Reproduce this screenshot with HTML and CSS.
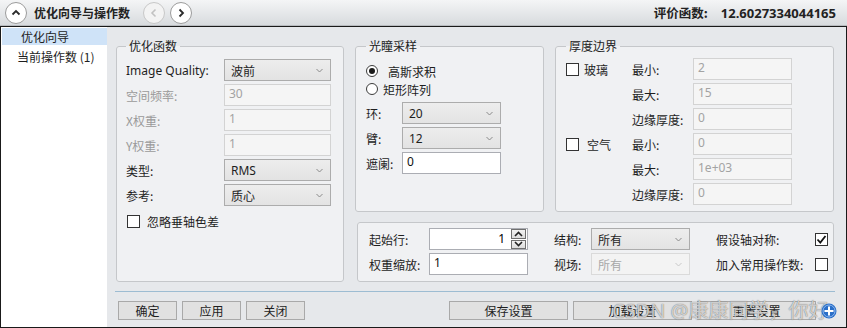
FILE: index.html
```html
<!DOCTYPE html>
<html lang="zh-CN">
<head>
    <meta charset="UTF-8">
    <title>优化向导与操作数</title>
    <link rel="stylesheet" href="styles.css">
</head>
<body>
<div class="window">
    <div class="topbar">
        <button class="round-btn">
            <svg width="10" height="10" viewBox="0 0 10 10"><polyline points="1.5,6.5 5,3 8.5,6.5" fill="none" stroke="#2b2b2b" stroke-width="1.8"/></svg>
        </button>
        <span class="title">优化向导与操作数</span>
        <button class="round-btn nav disabled">
            <svg width="10" height="10" viewBox="0 0 10 10"><polyline points="6.5,1.5 3,5 6.5,8.5" fill="none" stroke="#c2c2c2" stroke-width="1.6"/></svg>
        </button>
        <button class="round-btn">
            <svg width="10" height="10" viewBox="0 0 10 10"><polyline points="3.5,1.5 7,5 3.5,8.5" fill="none" stroke="#2b2b2b" stroke-width="1.8"/></svg>
        </button>
        <span class="spacer"></span>
        <span class="merit-label">评价函数:</span>
        <span class="merit-value">12.6027334044165</span>
    </div>

    <div class="frame">
        <ul class="side">
            <li class="active">优化向导</li>
            <li>当前操作数 (1)</li>
        </ul>

        <div class="content">
            <div class="groups">
                <!-- 优化函数 -->
                <fieldset class="group g-func">
                    <legend>优化函数</legend>
                    <div class="form func-form">
                        <label class="latin">Image Quality:</label>
                        <div class="select"><span>波前</span><svg class="chev" width="7" height="5" viewBox="0 0 7 5"><polyline points="0.5,1 3.5,4 6.5,1" fill="none" stroke="#8a8a8a" stroke-width="1"/></svg></div>

                        <label class="off">空间频率:</label>
                        <input class="field" type="text" value="30" disabled>

                        <label class="off">X权重:</label>
                        <input class="field" type="text" value="1" disabled>

                        <label class="off">Y权重:</label>
                        <input class="field" type="text" value="1" disabled>

                        <label>类型:</label>
                        <div class="select"><span class="latin">RMS</span><svg class="chev" width="7" height="5" viewBox="0 0 7 5"><polyline points="0.5,1 3.5,4 6.5,1" fill="none" stroke="#8a8a8a" stroke-width="1"/></svg></div>

                        <label>参考:</label>
                        <div class="select"><span>质心</span><svg class="chev" width="7" height="5" viewBox="0 0 7 5"><polyline points="0.5,1 3.5,4 6.5,1" fill="none" stroke="#8a8a8a" stroke-width="1"/></svg></div>
                    </div>
                    <div class="check-row">
                        <span class="check"></span>
                        <span>忽略垂轴色差</span>
                    </div>
                </fieldset>

                <!-- 光瞳采样 -->
                <fieldset class="group g-pupil">
                    <legend>光瞳采样</legend>
                    <div class="radios">
                        <div class="radio-row"><span class="radio on"></span><span class="r1">高斯求积</span></div>
                        <div class="radio-row"><span class="radio"></span><span class="r2">矩形阵列</span></div>
                    </div>
                    <div class="form pupil-form">
                        <label>环:</label>
                        <div class="select"><span class="latin">20</span><svg class="chev" width="7" height="5" viewBox="0 0 7 5"><polyline points="0.5,1 3.5,4 6.5,1" fill="none" stroke="#8a8a8a" stroke-width="1"/></svg></div>

                        <label>臂:</label>
                        <div class="select"><span class="latin">12</span><svg class="chev" width="7" height="5" viewBox="0 0 7 5"><polyline points="0.5,1 3.5,4 6.5,1" fill="none" stroke="#8a8a8a" stroke-width="1"/></svg></div>

                        <label>遮阑:</label>
                        <input class="field" type="text" value="0">
                    </div>
                </fieldset>

                <!-- 厚度边界 -->
                <fieldset class="group g-thick">
                    <legend>厚度边界</legend>
                    <div class="form thick-form">
                        <div class="check-cell"><span class="check"></span><span class="cl1">玻璃</span></div>
                        <label>最小:</label>
                        <input class="field" type="text" value="2" disabled>

                        <div></div>
                        <label>最大:</label>
                        <input class="field" type="text" value="15" disabled>

                        <div></div>
                        <label>边缘厚度:</label>
                        <input class="field" type="text" value="0" disabled>

                        <div class="check-cell"><span class="check"></span><span class="cl2">空气</span></div>
                        <label>最小:</label>
                        <input class="field" type="text" value="0" disabled>

                        <div></div>
                        <label>最大:</label>
                        <input class="field" type="text" value="1e+03" disabled>

                        <div></div>
                        <label>边缘厚度:</label>
                        <input class="field" type="text" value="0" disabled>
                    </div>
                </fieldset>

                <!-- 操作数设置 -->
                <fieldset class="group g-ops">
                    <div class="form ops-form">
                        <label>起始行:</label>
                        <div class="spin">
                            <input type="text" value="1">
                            <div class="spin-btns">
                                <span><svg width="9" height="6" viewBox="0 0 9 6"><polyline points="1,5 4.5,1.5 8,5" fill="none" stroke="#222" stroke-width="1.6"/></svg></span>
                                <span><svg width="9" height="6" viewBox="0 0 9 6"><polyline points="1,1 4.5,4.5 8,1" fill="none" stroke="#222" stroke-width="1.6"/></svg></span>
                            </div>
                        </div>
                        <label>结构:</label>
                        <div class="select"><span>所有</span><svg class="chev" width="7" height="5" viewBox="0 0 7 5"><polyline points="0.5,1 3.5,4 6.5,1" fill="none" stroke="#8a8a8a" stroke-width="1"/></svg></div>
                        <label>假设轴对称:</label>
                        <span class="check checked"><svg width="11" height="11" viewBox="0 0 11 11"><polyline points="1.5,5.5 4.3,8.5 9.5,2" fill="none" stroke="#111" stroke-width="1.8"/></svg></span>

                        <label>权重缩放:</label>
                        <input class="field" type="text" value="1">
                        <label>视场:</label>
                        <div class="select disabled"><span>所有</span><svg class="chev" width="7" height="5" viewBox="0 0 7 5"><polyline points="0.5,1 3.5,4 6.5,1" fill="none" stroke="#c8c8c8" stroke-width="1"/></svg></div>
                        <label>加入常用操作数:</label>
                        <span class="check"></span>
                    </div>
                </fieldset>
            </div>

            <div class="sep"></div>

            <div class="actions">
                <button class="btn small">确定</button>
                <button class="btn small">应用</button>
                <button class="btn small">关闭</button>
                <span class="spacer"></span>
                <button class="btn wide">保存设置</button>
                <button class="btn wide">加载设置</button>
                <button class="btn wide">重置设置</button>
            </div>
        </div>
    </div>

    <div class="watermark">CSDN @康康同学，你好</div>
    <svg class="help" width="16" height="16" viewBox="0 0 16 16">
        <circle cx="8" cy="8" r="7.5" fill="#2a6fc9"/>
        <circle cx="8" cy="8" r="6" fill="none" stroke="#8fb8ee" stroke-width="1"/>
        <path d="M8 3.5v9M3.5 8h9" stroke="#fff" stroke-width="2"/>
    </svg>
</div>
</body>
</html>
```

FILE: styles.css
```css
* {
    box-sizing: border-box;
}
body {
    margin: 0;
    font-family: "Noto Sans CJK SC", sans-serif;
    font-size: 12px;
    color: #1e1e1e;
    background: #fff;
}
.latin {
    font-family: "Noto Sans", "Noto Sans CJK SC", sans-serif;
}
.window {
    position: relative;
    width: 847px;
    height: 328px;
    display: flex;
    flex-direction: column;
    overflow: hidden;
}

/* top bar */
.topbar {
    height: 26px;
    display: flex;
    align-items: center;
    padding: 0 11px 0 5px;
    background: linear-gradient(#f4f5f6, #d8dbde);
    border-bottom: 1px solid #b8bbbf;
}
.round-btn {
    width: 22px;
    height: 22px;
    padding: 0;
    border-radius: 50%;
    border: 1px solid #9c9c9c;
    background: #fff;
    display: flex;
    align-items: center;
    justify-content: center;
}
.round-btn.nav {
    margin-left: 13px;
    margin-right: 5px;
}
.round-btn.disabled {
    border-color: #c8c8c8;
    background: #f3f3f3;
}
.title {
    margin-left: 7px;
    font-weight: bold;
    font-size: 12px;
    color: #222;
}
.spacer {
    flex: 1;
}
.merit-label {
    font-weight: bold;
    font-size: 12.5px;
    color: #222;
}
.merit-value {
    margin-left: 13px;
    font-family: "Noto Sans", sans-serif;
    font-weight: bold;
    font-size: 13px;
    color: #222;
}

/* main frame */
.frame {
    flex: 1;
    display: flex;
    border: 1px solid #1a1a1a;
}
.side {
    width: 106px;
    margin: 0;
    padding: 1px 0 0 1px;
    list-style: none;
    background: #fff;
}
.side li {
    height: 17px;
    line-height: 17px;
    padding-left: 15px;
    white-space: nowrap;
}
.side li.active {
    background: #cfe3f8;
    padding-left: 19px;
}
.side li + li {
    margin-top: 3px;
}
.content {
    flex: 1;
    background: #e6e8eb;
    padding: 11px 11px 0 9px;
}
.groups {
    display: grid;
    grid-template-columns: 228px 189px 279px;
    grid-template-rows: 174px 60px;
    column-gap: 11px;
    row-gap: 10px;
}

/* group boxes */
.group {
    margin: 0;
    min-width: 0;
    border: 1px solid #c5c7ca;
    border-radius: 3px;
    background: #f0f1f3;
    padding: 5px 10px 0 10px;
}
.group legend {
    padding: 0 3px;
    line-height: 16px;
    font-size: 12px;
    color: #222;
}
.g-func {
    grid-row: 1 / 3;
    padding-left: 9px;
}
.g-thick {
    padding-top: 4px;
}
.g-ops {
    grid-column: 2 / 4;
    margin-left: 2px;
    padding: 5px 10px 7px 11px;
}

.form {
    display: grid;
    grid-auto-rows: 22px;
    row-gap: 3px;
    align-items: center;
}
.form label {
    white-space: nowrap;
}
.form label.off {
    color: #9a9a9a;
}
.func-form {
    grid-template-columns: 98px 107px;
}
.pupil-form {
    margin-top: 4px;
    grid-template-columns: 36px 99px;
}
.thick-form {
    grid-template-columns: 66px 61px 99px;
}
.ops-form {
    grid-template-columns: 60px 125px 37px 125px 99px 13px;
}
.ops-form .field,
.ops-form .select,
.ops-form .spin {
    width: 99px;
}

/* controls */
.field {
    height: 22px;
    width: 100%;
    margin: 0;
    border: 1px solid #abadb3;
    background: #fff;
    font: inherit;
    font-family: "Noto Sans", sans-serif;
    color: #111;
    padding: 0 4px 4px;
}
.field:disabled {
    background: #f5f5f5;
    border-color: #d3d3d3;
    color: #a3a3a3;
}
.select {
    height: 22px;
    display: flex;
    align-items: center;
    justify-content: space-between;
    border: 1px solid #acacac;
    background: linear-gradient(#ededed, #e3e3e3);
    padding: 0 7px 0 6px;
}
.select.disabled {
    background: #f3f3f3;
    border-color: #dadada;
    color: #a8a8a8;
}
.spin {
    height: 22px;
    display: flex;
    border: 1px solid #abadb3;
    background: #fff;
}
.spin input {
    flex: 1;
    min-width: 0;
    border: none;
    background: transparent;
    font: inherit;
    font-family: "Noto Sans", sans-serif;
    text-align: right;
    padding: 0 6px 2px 0;
}
.spin-btns {
    width: 16px;
    display: flex;
    flex-direction: column;
    gap: 1px;
    padding: 0 1px 0 0;
}
.spin-btns span {
    flex: 1;
    display: flex;
    align-items: center;
    justify-content: center;
    border: 1px solid #707070;
    background: linear-gradient(#f2f2f2, #dcdcdc);
}

.check {
    width: 13px;
    height: 13px;
    flex: none;
    border: 1px solid #333;
    background: #fff;
    display: flex;
    align-items: center;
    justify-content: center;
}
.check-row {
    display: flex;
    align-items: center;
    margin-top: 7px;
    margin-left: 1px;
}
.check-row .check {
    margin-right: 7px;
}
.check-cell {
    display: flex;
    align-items: center;
}
.cl1 {
    margin-left: 5px;
}
.cl2 {
    margin-left: 8px;
}

.radios {
    margin-top: 3px;
}
.radio-row {
    height: 18px;
    display: flex;
    align-items: center;
}
.radio {
    width: 12px;
    height: 12px;
    border: 1px solid #3c3c3c;
    border-radius: 50%;
    background: #fff;
    display: flex;
    align-items: center;
    justify-content: center;
}
.radio.on::after {
    content: "";
    width: 6px;
    height: 6px;
    border-radius: 50%;
    background: #1a1a1a;
}
.r1 {
    margin-left: 10px;
}
.r2 {
    margin-left: 5px;
}

/* bottom */
.sep {
    margin: 9px 0 0 -1px;
    height: 1px;
    background: #9dbcd2;
}
.actions {
    margin-top: 9px;
    display: flex;
    gap: 5px;
    padding: 0 19px 0 2px;
}
.btn {
    height: 19px;
    padding: 0;
    border: 1px solid #a9a9a9;
    background: #e1e1e1;
    font: inherit;
    color: #1e1e1e;
    line-height: 17px;
}
.btn.small {
    width: 59px;
}
.btn.wide {
    width: 119px;
}

/* watermark over the bottom buttons */
.watermark {
    position: absolute;
    left: 612px;
    top: 298px;
    font-family: "Noto Sans", "Noto Sans CJK SC", sans-serif;
    font-size: 20px;
    line-height: 26px;
    color: rgba(255, 255, 255, 0.7);
    text-shadow: 0 0 1px rgba(60, 60, 60, 0.9);
    white-space: nowrap;
}
.help {
    position: absolute;
    left: 821px;
    top: 303px;
}
```
